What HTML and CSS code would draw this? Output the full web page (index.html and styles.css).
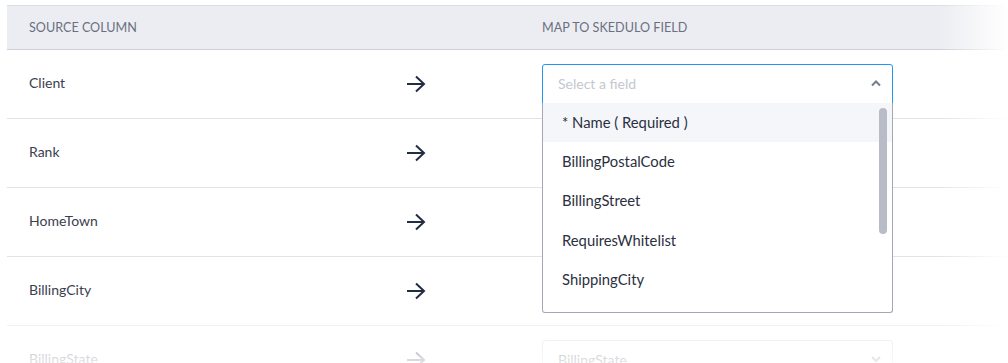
FILE: index.html
```html
<!DOCTYPE html>
<html lang="en">
<head>
  <meta charset="UTF-8" />
  <title>Map Columns</title>
  <link rel="stylesheet" href="styles.css">
</head>
<body>
  <div class="mapper">
    <div class="map-head">
      <div class="col-source">Source Column</div>
      <div class="col-arrow"></div>
      <div class="col-field">Map to Skedulo Field</div>
    </div>

    <div class="map-row">
      <div class="col-source">Client</div>
      <div class="col-arrow">
        <svg class="arrow" width="20" height="18" viewBox="0 0 20 18"><path d="M1 9h17M10 1.5l8 7.5-8 7.5" /></svg>
      </div>
      <div class="col-field">
        <div class="picker open">
          <div class="picker-box">
            <span class="placeholder">Select a field</span>
            <svg class="chev" width="12" height="8" viewBox="0 0 12 8"><path d="M2 6.5l4-4 4 4" /></svg>
          </div>
          <div class="picker-menu">
            <ul class="options">
              <li class="active">* Name ( Required )</li>
              <li>BillingPostalCode</li>
              <li>BillingStreet</li>
              <li>RequiresWhitelist</li>
              <li>ShippingCity</li>
              <li>ShippingCountry</li>
            </ul>
            <div class="thumb"></div>
          </div>
        </div>
      </div>
    </div>

    <div class="map-row">
      <div class="col-source">Rank</div>
      <div class="col-arrow">
        <svg class="arrow" width="20" height="18" viewBox="0 0 20 18"><path d="M1 9h17M10 1.5l8 7.5-8 7.5" /></svg>
      </div>
      <div class="col-field">
        <div class="picker"><div class="picker-box"><span>Rank</span></div></div>
      </div>
    </div>

    <div class="map-row">
      <div class="col-source">HomeTown</div>
      <div class="col-arrow">
        <svg class="arrow" width="20" height="18" viewBox="0 0 20 18"><path d="M1 9h17M10 1.5l8 7.5-8 7.5" /></svg>
      </div>
      <div class="col-field">
        <div class="picker"><div class="picker-box"><span>HomeTown</span></div></div>
      </div>
    </div>

    <div class="map-row">
      <div class="col-source">BillingCity</div>
      <div class="col-arrow">
        <svg class="arrow" width="20" height="18" viewBox="0 0 20 18"><path d="M1 9h17M10 1.5l8 7.5-8 7.5" /></svg>
      </div>
      <div class="col-field">
        <div class="picker"><div class="picker-box"><span>BillingCity</span></div></div>
      </div>
    </div>

    <div class="map-row">
      <div class="col-source">BillingState</div>
      <div class="col-arrow">
        <svg class="arrow" width="20" height="18" viewBox="0 0 20 18"><path d="M1 9h17M10 1.5l8 7.5-8 7.5" /></svg>
      </div>
      <div class="col-field">
        <div class="picker">
          <div class="picker-box">
            <span>BillingState</span>
            <svg class="chev" width="12" height="8" viewBox="0 0 12 8"><path d="M2 2l4 4 4-4" /></svg>
          </div>
        </div>
      </div>
    </div>

    <div class="fade-right"></div>
    <div class="fade-bottom"></div>
  </div>
</body>
</html>
```

FILE: styles.css
```css
:root {
  --text: #3b4050;
  --muted: #6b7080;
  --line: #e1e3e9;
  --head-bg: #ecedf2;
  --blue: #2196f3;
}
* { box-sizing: border-box; }
body {
  margin: 0;
  font-family: Lato, 'Open Sans', sans-serif;
  font-size: 14px;
  color: var(--text);
  background: #fff;
}
.mapper {
  position: relative;
  height: 363px;
  overflow: hidden;
  padding: 5px 0 0 7px;
}
.map-head, .map-row {
  display: grid;
  grid-template-columns: 378px 135px 351px;
  align-items: center;
  padding-left: 22px;
}
.map-head {
  height: 45px;
  background: var(--head-bg);
  border-top: 1px solid #dcdee5;
  border-bottom: 1px solid #cdd0d8;
  font-size: 12.6px;
  text-transform: uppercase;
  color: var(--muted);
}
.map-row {
  height: 69px;
  border-bottom: 1px solid var(--line);
}
.col-arrow { display: flex; }
.map-row .col-source { padding-bottom: 4px; }

.arrow { fill: none; stroke: #222c43; stroke-width: 2; margin-left: -1px; }

.picker { position: relative; }
.picker-box {
  height: 40px;
  display: flex;
  align-items: center;
  justify-content: space-between;
  padding: 0 10px 2px 15px;
  border: 1px solid #d3d6dd;
  border-radius: 3px;
}
.open .picker-box {
  border-color: var(--blue);
  border-radius: 3px 3px 0 0;
}
.placeholder { color: #c4c7cf; }
.chev { fill: none; stroke: #777d8c; stroke-width: 2; }

.picker-menu {
  position: absolute;
  top: 39px;
  left: 0;
  width: 351px;
  height: 210px;
  background: #fff;
  border: 1px solid #a3a8b4;
  border-top: none;
  border-radius: 0 0 3px 3px;
  overflow: hidden;
  z-index: 2;
}
.options { list-style: none; margin: 0; padding: 0; }
.options li {
  height: 39.3px;
  display: flex;
  align-items: center;
  padding: 0 0 2px 19px;
  font-size: 14.8px;
  color: #2b3040;
}
.options li.active { background: #f5f6fa; }
.thumb {
  position: absolute;
  top: 5px;
  right: 5px;
  width: 8px;
  height: 126px;
  border-radius: 4px;
  background: #b8bcc7;
}

.fade-right {
  position: absolute;
  top: 0;
  right: 0;
  width: 70px;
  height: 100%;
  background: linear-gradient(to right, rgba(255,255,255,0), #fff);
  z-index: 1;
}
.fade-bottom {
  position: absolute;
  left: 0;
  bottom: 0;
  width: 100%;
  height: 42px;
  background: linear-gradient(rgba(255,255,255,0.45), rgba(255,255,255,0.85));
  z-index: 3;
}
```
